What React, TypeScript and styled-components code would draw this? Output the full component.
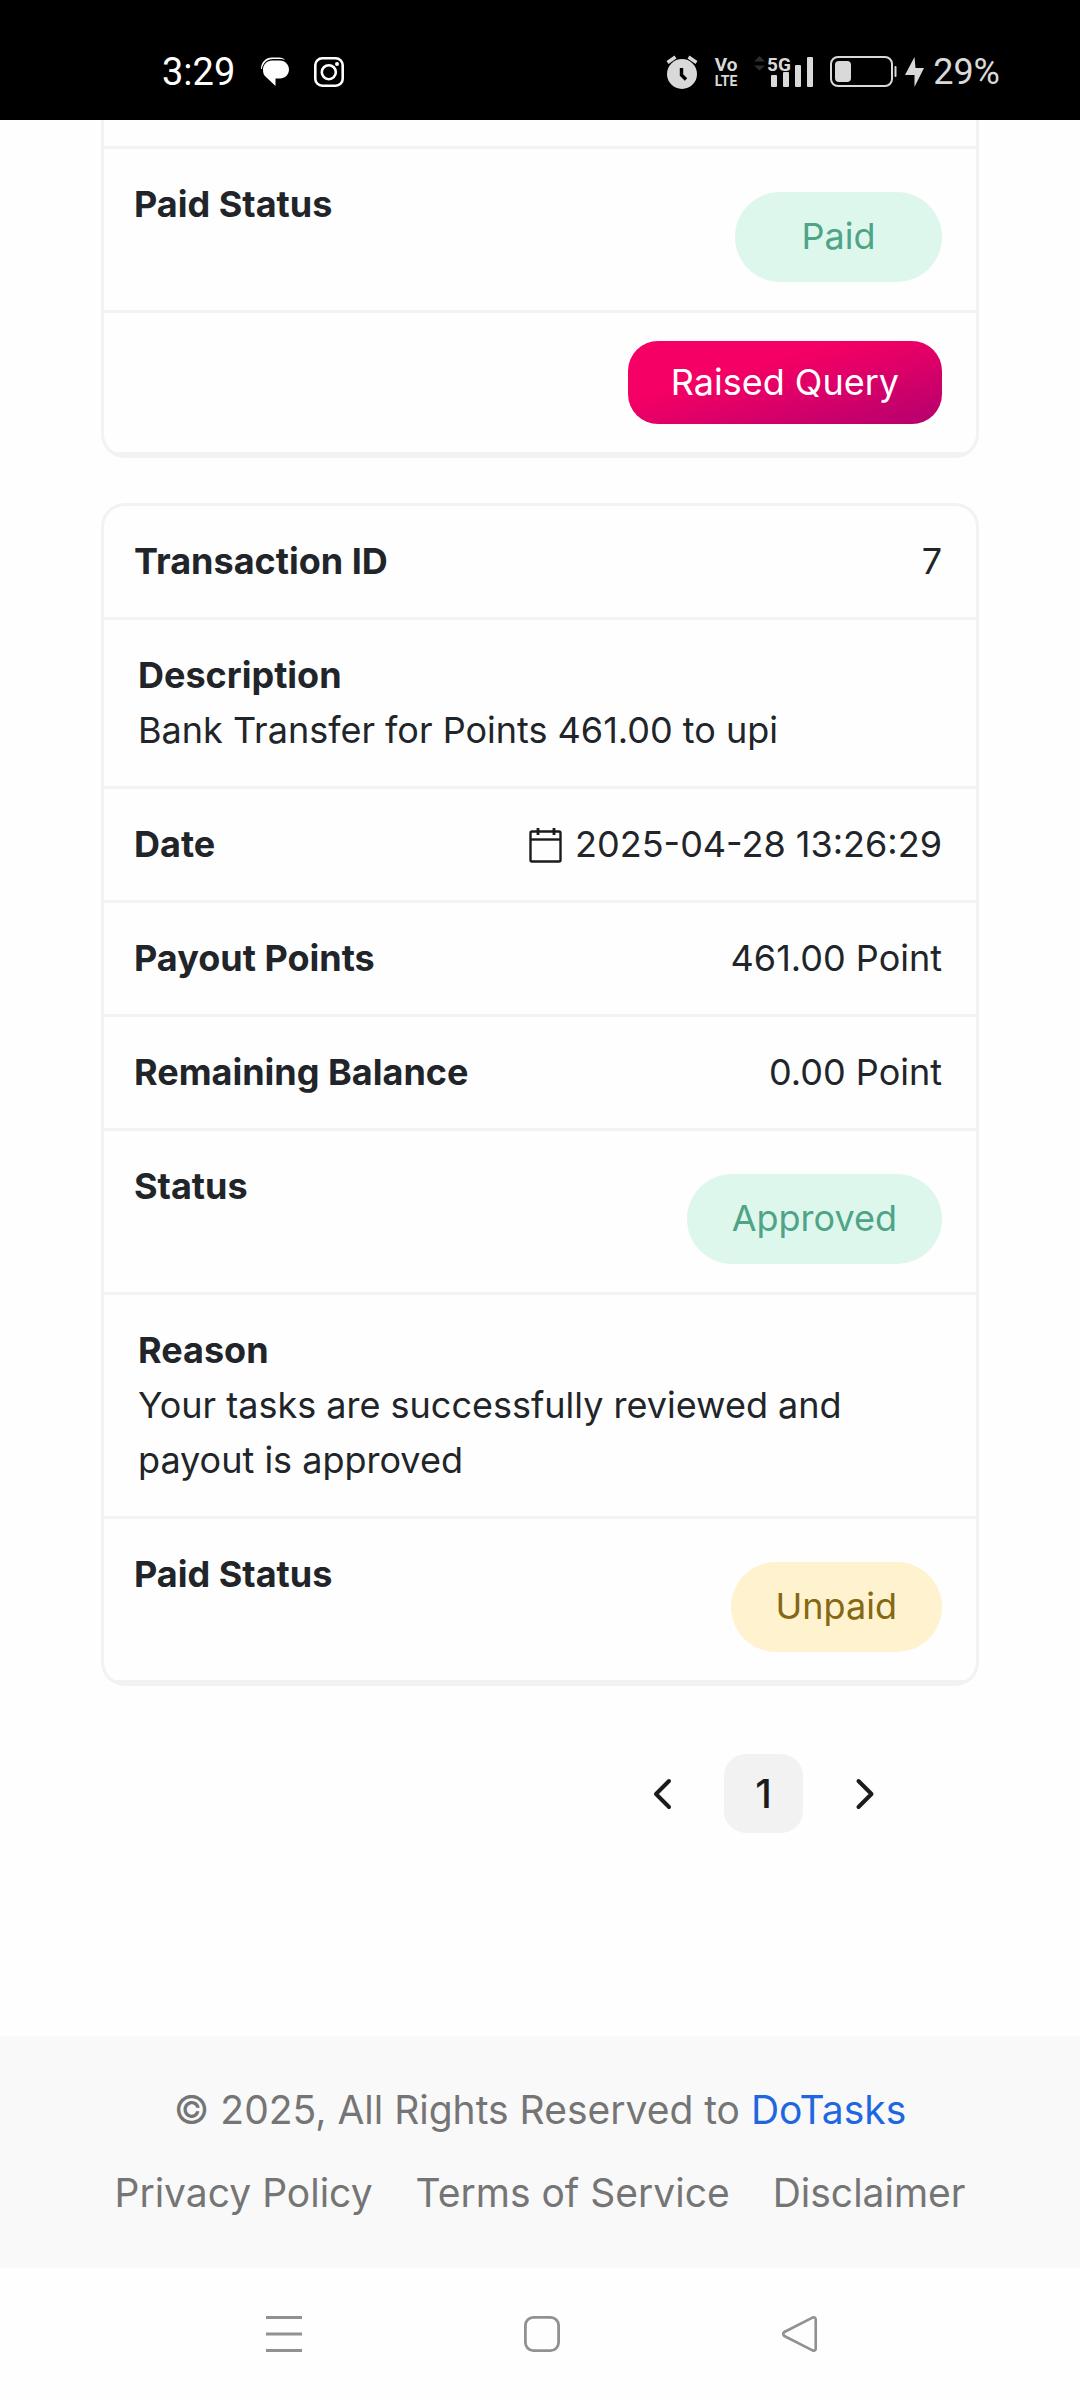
import React from 'react';
import styled, { createGlobalStyle } from 'styled-components';

const GlobalStyle = createGlobalStyle`
  *, *::before, *::after { box-sizing: border-box; }
  body {
    margin: 0;
    background: #fefefe;
    color: #212529;
    font-family: Inter, "Liberation Sans", sans-serif;
    font-optical-sizing: none;
    font-size: 36px;
    line-height: 55px;
  }
`;

const Page = styled.div`
  display: flex;
  flex-direction: column;
  min-height: 100vh;
`;

const StatusBar = styled.header`
  display: flex;
  align-items: center;
  justify-content: space-between;
  height: 120px;
  padding: 24px 80px 0 162px;
  background: #000;
  font-family: Roboto, sans-serif;
  line-height: 40px;
`;

const StatusGroup = styled.div<{ $color: string; $gap: number }>`
  display: flex;
  align-items: center;
  gap: ${(p) => p.$gap}px;
  color: ${(p) => p.$color};
  svg { display: block; flex: none; overflow: visible; }
`;

const BatteryGroup = styled.div`
  display: flex;
  align-items: center;
  gap: 8px;
`;

const Clock = styled.time`
  font-size: 38px;
`;

const Main = styled.main`
  flex: 1;
  display: flex;
  flex-direction: column;
  padding: 0 101px;
`;

const Card = styled.dl<{ $continued?: boolean }>`
  margin: 0 0 45px;
  border: 3px solid #f2f2f2;
  border-radius: 24px;
  overflow: hidden;
  ${(p) => p.$continued && 'border-top: 0; border-top-left-radius: 0; border-top-right-radius: 0;'}
`;

const SplitRow = styled.div`
  display: flex;
  justify-content: space-between;
  align-items: flex-start;
  padding: 28px 34px 28px 30px;
  border-bottom: 3px solid #f2f2f2;
`;

const RowTail = styled.div`
  height: 29px;
  border-bottom: 3px solid #f2f2f2;
`;

const ActionRow = styled.div`
  display: flex;
  justify-content: flex-end;
  padding: 28px 34px;
  border-bottom: 3px solid #f2f2f2;
`;

const StackRow = styled.div`
  padding: 28px 34px;
  border-bottom: 3px solid #f2f2f2;
`;

const Label = styled.dt`
  font-weight: 700;
`;

const Value = styled.dd`
  display: flex;
  align-items: center;
  gap: 13px;
  margin: 0;
`;

const Badge = styled.span<{ $tone: 'success' | 'warning' }>`
  min-width: 207px;
  margin-top: 15px;
  padding: 17px 45px 19px;
  border-radius: 45px;
  line-height: 54px;
  text-align: center;
  color: ${(p) => (p.$tone === 'success' ? '#4fa487' : '#866713')};
  background: ${(p) => (p.$tone === 'success' ? '#def7ec' : '#fff2cf')};
`;

const QueryButton = styled.button`
  height: 83px;
  padding: 0 43px;
  border: 0;
  border-radius: 30px;
  background: linear-gradient(165deg, #f50064 35%, #b4006e 100%);
  color: #fff;
  font: inherit;
`;

const Pagination = styled.nav`
  display: flex;
  justify-content: flex-end;
  gap: 22px;
  padding: 23px 75px 203px 0;
`;

const PageButton = styled.button<{ $active?: boolean }>`
  display: grid;
  place-items: center;
  width: 79px;
  height: 79px;
  padding: 0;
  border: 0;
  border-radius: 22px;
  background: ${(p) => (p.$active ? '#f2f2f2' : 'transparent')};
  color: #1b1b1b;
  font: inherit;
  font-size: 40px;
  font-weight: 500;
`;

const Footer = styled.footer`
  display: flex;
  flex-direction: column;
  align-items: center;
  gap: 23px;
  padding: 44px 24px 45px;
  background: #f9f9f9;
  color: #757575;
  font-size: 39px;
  line-height: 60px;
`;

const Copyright = styled.p`
  margin: 0;
`;

const FooterLinks = styled.div`
  display: flex;
  gap: 43px;
`;

const FooterLink = styled.a<{ $brand?: boolean }>`
  color: ${(p) => (p.$brand ? '#1f67e0' : 'inherit')};
  text-decoration: none;
`;

const SystemNav = styled.nav`
  display: flex;
  justify-content: space-between;
  height: 132px;
  padding: 0 240px 0 244px;
`;

const SystemButton = styled.button`
  display: grid;
  place-items: center;
  width: 80px;
  height: 100%;
  padding: 0;
  border: 0;
  background: transparent;
  color: #919191;
`;

const ChatIcon = () => (
  <svg width="31" height="30" viewBox="-2 0 31 30" fill="currentColor" aria-hidden="true">
    <path d="M0 12C0 5 5 .500 11 .500h7c3 0 5 1 6 2.500-2-.800-3-1-5-1h-7C6 2 2 6 .800 12Z" />
    <path d="M11 3.500h8c5 0 9 4 9 9s-4 9-9 9h-4.500v7.500l-9-8.500c-3-2-3.500-5-3.500-8 0-5 4-9 9-9Z" />
  </svg>
);

const InstagramIcon = () => (
  <svg width="30" height="30" viewBox="0 0 30 30" fill="none" stroke="currentColor" strokeWidth="2.600" aria-hidden="true">
    <rect x="1.300" y="1.300" width="27.400" height="27.400" rx="7" />
    <circle cx="14.800" cy="15.200" r="7" />
    <circle cx="23" cy="7" r="2" fill="currentColor" stroke="none" />
  </svg>
);

const AlarmIcon = () => (
  <svg width="32" height="34" viewBox="0 0 32 34" aria-hidden="true">
    <circle cx="16" cy="19" r="15" fill="currentColor" />
    <path d="M1.500 7.500 9.500 2M30.500 7.500 22.500 2" stroke="currentColor" strokeWidth="3.400" />
    <path d="M15.500 13v7l4.500 4.500" stroke="#000" strokeWidth="3.400" fill="none" />
  </svg>
);

const VolteIcon = () => (
  <svg width="24" height="32" viewBox="0 0 24 32" fill="currentColor" fontFamily="Roboto, sans-serif" fontWeight="700" textAnchor="middle">
    <text x="12" y="15" fontSize="19">Vo</text>
    <text x="12" y="30" fontSize="14">LTE</text>
  </svg>
);

const SignalIcon = () => (
  <svg width="60" height="34" viewBox="0 0 60 34" fill="currentColor">
    <path d="M0 6.500 5.500 1 11 6.500ZM0 10.500h11L5.500 15.500Z" fill="#2d2d2d" />
    <text x="13" y="16" fontSize="19" fontWeight="700" fontFamily="Roboto, sans-serif">5G</text>
    <rect x="17" y="20" width="6" height="12" rx="1" />
    <rect x="29" y="17" width="6" height="15" rx="1" />
    <rect x="41" y="10" width="6" height="22" rx="1" />
    <rect x="53" y="2" width="6" height="30" rx="1" />
  </svg>
);

const BatteryIcon = () => (
  <svg width="67" height="32" viewBox="0 0 67 32" aria-hidden="true">
    <rect x="1" y="1" width="61" height="29" rx="7" fill="none" stroke="currentColor" strokeWidth="2" />
    <rect x="5" y="5" width="16" height="21" rx="4" fill="currentColor" />
    <rect x="64.500" y="10" width="2" height="11" rx="1" fill="currentColor" />
  </svg>
);

const BoltIcon = () => (
  <svg width="20" height="32" viewBox="0 0 20 32" fill="currentColor" aria-hidden="true">
    <path d="M9.500 1 0 19h9.500v12L19 12h-8.500L9.500 1Z" />
  </svg>
);

const CalendarIcon = () => (
  <svg width="33" height="36" viewBox="0 0 33 36" fill="none" stroke="#1b1b1b" strokeWidth="2.400" aria-hidden="true">
    <rect x="1.500" y="4.500" width="30" height="30" rx="1.500" />
    <path d="M1 12.500h31" />
    <path d="M9 1v7M25 1v7" strokeWidth="2.800" />
  </svg>
);

const Chevron = ({ next }: { next?: boolean }) => (
  <svg width="20" height="32" viewBox="0 0 20 32" fill="none" stroke="currentColor" strokeWidth="4" strokeLinecap="round" strokeLinejoin="round" aria-hidden="true">
    <path d={next ? 'M3.500 3 16.500 16 3.500 29' : 'M16 3 3 16 16 29'} />
  </svg>
);

type BadgeTone = 'success' | 'warning';

const TextRow = ({ label, children }: { label: string; children: React.ReactNode }) => (
  <SplitRow>
    <Label>{label}</Label>
    <Value>{children}</Value>
  </SplitRow>
);

const BadgeRow = ({ label, text, tone }: { label: string; text: string; tone: BadgeTone }) => (
  <TextRow label={label}>
    <Badge $tone={tone}>{text}</Badge>
  </TextRow>
);

const NoteRow = ({ label, text }: { label: string; text: string }) => (
  <StackRow>
    <Label>{label}</Label>
    <Value>{text}</Value>
  </StackRow>
);

export default function App() {
  return (
    <>
      <GlobalStyle />
      <Page>
        <StatusBar>
          <StatusGroup $color="#fff" $gap={24}>
            <Clock>3:29</Clock>
            <ChatIcon />
            <InstagramIcon />
          </StatusGroup>
          <StatusGroup $color="#d9d9d9" $gap={16}>
            <AlarmIcon />
            <VolteIcon />
            <SignalIcon />
            <BatteryGroup>
              <BatteryIcon />
              <BoltIcon />
              <span>29%</span>
            </BatteryGroup>
          </StatusGroup>
        </StatusBar>

        <Main>
          <Card $continued>
            <RowTail />
            <BadgeRow label="Paid Status" text="Paid" tone="success" />
            <ActionRow>
              <QueryButton type="button">Raised Query</QueryButton>
            </ActionRow>
          </Card>

          <Card>
            <TextRow label="Transaction ID">7</TextRow>
            <NoteRow label="Description" text="Bank Transfer for Points 461.00 to upi" />
            <TextRow label="Date">
              <CalendarIcon />
              <time dateTime="2025-04-28T13:26:29">2025-04-28 13:26:29</time>
            </TextRow>
            <TextRow label="Payout Points">461.00 Point</TextRow>
            <TextRow label="Remaining Balance">0.00 Point</TextRow>
            <BadgeRow label="Status" text="Approved" tone="success" />
            <NoteRow label="Reason" text="Your tasks are successfully reviewed and payout is approved" />
            <BadgeRow label="Paid Status" text="Unpaid" tone="warning" />
          </Card>

          <Pagination aria-label="Pagination">
            <PageButton type="button" aria-label="Previous page"><Chevron /></PageButton>
            <PageButton type="button" $active aria-current="page">1</PageButton>
            <PageButton type="button" aria-label="Next page"><Chevron next /></PageButton>
          </Pagination>
        </Main>

        <Footer>
          <Copyright>
            © 2025, All Rights Reserved to <FooterLink href="#" $brand>DoTasks</FooterLink>
          </Copyright>
          <FooterLinks>
            <FooterLink href="#privacy">Privacy Policy</FooterLink>
            <FooterLink href="#terms">Terms of Service</FooterLink>
            <FooterLink href="#disclaimer">Disclaimer</FooterLink>
          </FooterLinks>
        </Footer>

        <SystemNav aria-label="System">
          <SystemButton type="button" aria-label="Recent apps">
            <svg width="36" height="36" viewBox="0 0 36 36" fill="none" stroke="currentColor" strokeWidth="3">
              <path d="M0 1.500h36M0 18h36M0 34.500h36" />
            </svg>
          </SystemButton>
          <SystemButton type="button" aria-label="Home">
            <svg width="36" height="36" viewBox="0 0 36 36" fill="none" stroke="currentColor" strokeWidth="2.800">
              <rect x="1.400" y="1.400" width="33.200" height="33.200" rx="8" />
            </svg>
          </SystemButton>
          <SystemButton type="button" aria-label="Back">
            <svg width="36" height="36" viewBox="0 0 36 36" fill="none" stroke="currentColor" strokeWidth="2.600" strokeLinejoin="round">
              <path d="M33.700 3.600v28.800q0 3-3.200 2L2.300 20q-2-2 0-4L30.500 1.600q3.200-1 3.200 2Z" />
            </svg>
          </SystemButton>
        </SystemNav>
      </Page>
    </>
  );
}
